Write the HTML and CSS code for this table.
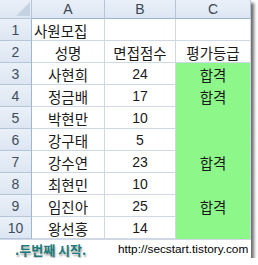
FILE: index.html
```html
<!DOCTYPE html>
<html>
<head>
<meta charset="utf-8">
<link rel="stylesheet" href="styles.css">
</head>
<body>
<div class="sheet">
  <div class="grid">
    <div class="hd corner"><span class="tri"></span></div>
    <div class="hd col">A</div>
    <div class="hd col">B</div>
    <div class="hd col">C</div>

    <div class="hd row">1</div>
    <div class="c left">사원모집</div>
    <div class="c"></div>
    <div class="c"></div>

    <div class="hd row">2</div>
    <div class="c">성명</div>
    <div class="c">면접점수</div>
    <div class="c">평가등급</div>

    <div class="hd row">3</div>
    <div class="c">사현희</div>
    <div class="c num">24</div>
    <div class="c g">합격</div>

    <div class="hd row">4</div>
    <div class="c">정금배</div>
    <div class="c num">17</div>
    <div class="c g">합격</div>

    <div class="hd row">5</div>
    <div class="c">박현만</div>
    <div class="c num">10</div>
    <div class="c g"></div>

    <div class="hd row">6</div>
    <div class="c">강구태</div>
    <div class="c num">5</div>
    <div class="c g"></div>

    <div class="hd row">7</div>
    <div class="c">강수연</div>
    <div class="c num">23</div>
    <div class="c g">합격</div>

    <div class="hd row">8</div>
    <div class="c">최현민</div>
    <div class="c num">10</div>
    <div class="c g"></div>

    <div class="hd row">9</div>
    <div class="c">임진아</div>
    <div class="c num">25</div>
    <div class="c g">합격</div>

    <div class="hd row">10</div>
    <div class="c">왕선홍</div>
    <div class="c num">14</div>
    <div class="c g"></div>
  </div>
  <div class="footer">
    <span class="brand">.두번째 시작.</span>
    <span class="url">http://secstart.tistory.com</span>
  </div>
</div>
</body>
</html>
```

FILE: styles.css
```css
html, body {
  margin: 0;
  padding: 0;
  background: #ffffff;
}
.sheet {
  width: 251px;
  background: #ffffff;
  box-shadow: 3px 3px 3px rgba(60, 60, 60, 0.75);
  font-family: "Noto Sans CJK KR", "Noto Sans", sans-serif;
}
.grid {
  display: grid;
  grid-template-columns: 32px 73px 71px 75px;
  grid-template-rows: 19px repeat(10, 22px);
}
.hd {
  background: linear-gradient(#eaf0f8, #dce6f2);
  color: #3b4654;
  font-family: "Liberation Sans", sans-serif;
  font-size: 14px;
  display: flex;
  align-items: center;
  justify-content: center;
  box-sizing: border-box;
  border-right: 1px solid #b5c6db;
  border-bottom: 1px solid #b5c6db;
}
.col {
  border-bottom-color: #9eb6ce;
}
.corner {
  position: relative;
}
.tri {
  position: absolute;
  right: 1px;
  bottom: 2px;
  width: 0;
  height: 0;
  border-left: 14px solid transparent;
  border-bottom: 14px solid #c6d2e1;
}
.row {
  color: #3f4d5e;
  border-right-color: #9eb6ce;
}
.c {
  box-sizing: border-box;
  border-right: 1px solid #d0d7e5;
  border-bottom: 1px solid #d0d7e5;
  display: flex;
  align-items: center;
  justify-content: center;
  font-size: 14.5px;
  color: #1a1a1a;
  white-space: nowrap;
  padding-top: 1px;
}
.left {
  justify-content: flex-start;
  padding-left: 2px;
}
.num {
  font-family: "Liberation Sans", sans-serif;
  font-size: 14px;
}
.g {
  background: #8ef78a;
  border-bottom-color: #8ef78a;
  border-right-color: #d0d7e5;
}
.footer {
  height: 19px;
  display: flex;
  align-items: center;
  padding-left: 15px;
  border-top: 1px solid #d0d7e5;
  box-sizing: border-box;
  white-space: nowrap;
}
.brand {
  font-size: 13px;
  font-weight: bold;
  color: #1c7b7b;
  text-shadow: 1px 2px 2px rgba(0, 0, 0, 0.35);
  width: 103px;
}
.url {
  font-family: "Liberation Sans", sans-serif;
  font-size: 11.8px;
  color: #000;
}
```
